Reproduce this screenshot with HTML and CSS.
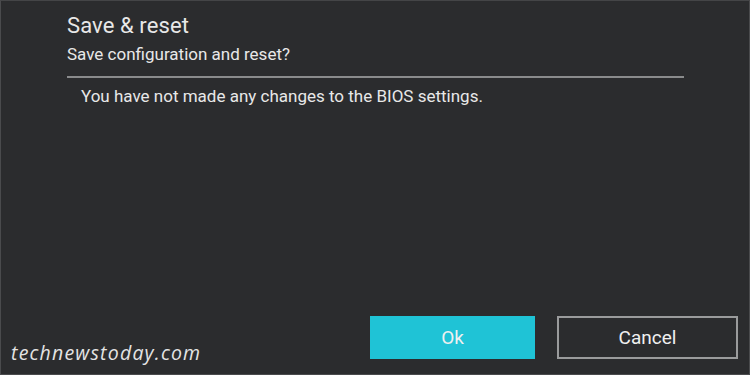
FILE: index.html
```html
<!DOCTYPE html>
<html>
<head>
<meta charset="utf-8">
<link rel="stylesheet" href="styles.css">
</head>
<body>
<div class="screen">
  <div class="dialog">
    <h1 class="title">Save &amp; reset</h1>
    <p class="subtitle">Save configuration and reset?</p>
    <hr class="divider">
    <p class="message">You have not made any changes to the BIOS settings.</p>
    <div class="actions">
      <button class="btn btn-ok">Ok</button>
      <button class="btn btn-cancel">Cancel</button>
    </div>
  </div>
  <div class="watermark">technewstoday.com</div>
</div>
</body>
</html>
```

FILE: styles.css
```css
* { box-sizing: border-box; }
html, body { margin: 0; padding: 0; background: #2b2c2e; }
.screen {
  position: relative;
  width: 750px;
  height: 375px;
  background: #2b2c2e;
  border: 1px solid #4a4b4d;
  border-top-color: #444547;
  font-family: Roboto, "Open Sans", sans-serif;
  color: #e8e8e8;
  overflow: hidden;
}
.dialog {
  height: 100%;
  display: flex;
  flex-direction: column;
  padding: 11px 11px 15px 66px;
}
.title {
  margin: 0;
  font-size: 22px;
  font-weight: 400;
  line-height: 28px;
  letter-spacing: 0.1px;
}
.subtitle {
  margin: 4px 0 0;
  font-size: 17px;
  line-height: 20px;
}
.divider {
  margin: 12px 0 0;
  width: 617px;
  border: 0;
  height: 2px;
  background: #8a8b8c;
}
.message {
  margin: 8px 0 0 14px;
  font-size: 17px;
  line-height: 20px;
}
.actions {
  margin-top: auto;
  display: flex;
  justify-content: flex-end;
  gap: 22px;
}
.btn {
  font-family: Roboto, "Open Sans", sans-serif;
  font-size: 19px;
  color: #f0f0f0;
  height: 43px;
}
.btn-ok {
  width: 165px;
  background: #1fc3d6;
  border: 0;
}
.btn-cancel {
  width: 181px;
  background: transparent;
  border: 2px solid #9a9b9c;
}
.watermark {
  position: absolute;
  left: 10px;
  bottom: 8px;
  font-family: "Open Sans", sans-serif;
  font-style: italic;
  font-size: 19.5px;
  color: #e4e4e4;
  letter-spacing: 1.2px;
}
```
